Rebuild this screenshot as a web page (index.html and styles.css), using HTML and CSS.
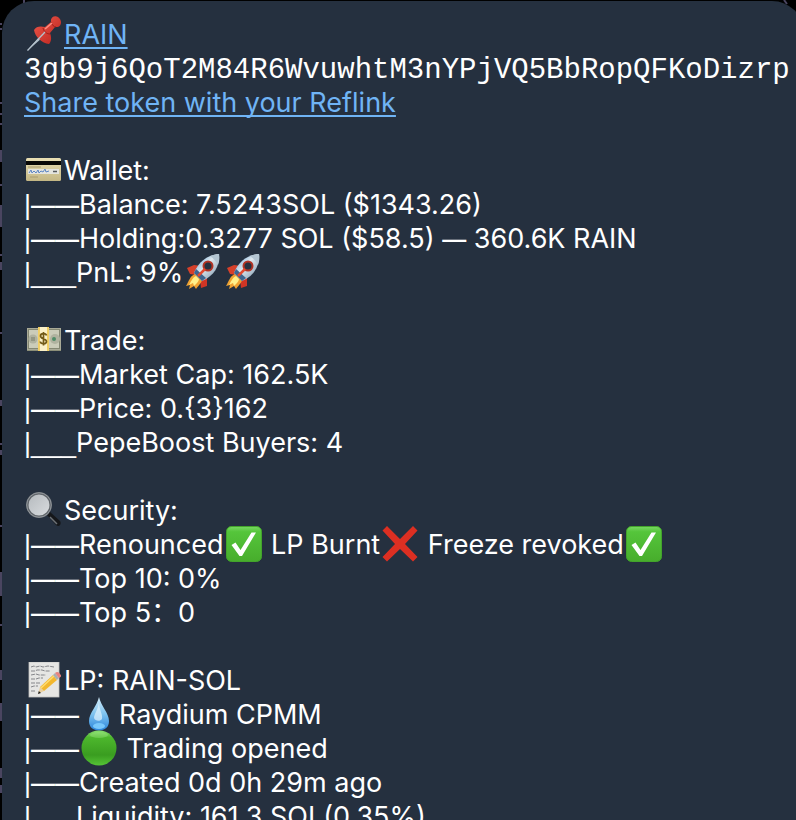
FILE: index.html
```
<!DOCTYPE html>
<html lang="en">
<head>
    <meta charset="UTF-8">
    <meta name="viewport" content="width=device-width, initial-scale=1.0">
    <title>RAIN</title>
    <link rel="stylesheet" href="styles.css">
</head>
<body>
    <!-- emoji shapes -->
    <svg class="defs" width="0" height="0" aria-hidden="true">
        <defs>
            <linearGradient id="gCard" x1="0" y1="0" x2="0" y2="1"><stop offset="0" stop-color="#e9dfb4"/><stop offset="1" stop-color="#c3b684"/></linearGradient>
            <linearGradient id="gGreen" x1="0" y1="0" x2="0" y2="1"><stop offset="0" stop-color="#79d963"/><stop offset=".15" stop-color="#55c53b"/><stop offset="1" stop-color="#47ad2c"/></linearGradient>
            <linearGradient id="gBall" x1="0" y1="0" x2="0" y2="1"><stop offset="0" stop-color="#8be070"/><stop offset=".2" stop-color="#4db72d"/><stop offset=".7" stop-color="#3a9d20"/><stop offset="1" stop-color="#55c436"/></linearGradient>
            <linearGradient id="gDrop" x1="0" y1="0" x2="0" y2="1"><stop offset="0" stop-color="#d6eefb"/><stop offset=".5" stop-color="#7fc3ef"/><stop offset="1" stop-color="#2b86dc"/></linearGradient>
            <linearGradient id="gBody" x1="0" y1="0" x2="1" y2="1"><stop offset="0" stop-color="#4f94cf"/><stop offset=".45" stop-color="#dfe8ee"/><stop offset="1" stop-color="#6d8ba5"/></linearGradient>
            <linearGradient id="gLens" x1="0" y1="0" x2="1" y2="1"><stop offset="0" stop-color="#b4b9bd"/><stop offset="1" stop-color="#dadde0"/></linearGradient>
            <linearGradient id="gPin" x1="0" y1="0" x2="1" y2="1"><stop offset="0" stop-color="#f0594c"/><stop offset="1" stop-color="#b9221c"/></linearGradient>
        </defs>
        <symbol id="pin" viewBox="0 0 36 36">
            <path d="M1 35 L14 20 L16 22 Z" fill="#aebfca"/>
            <path d="M8 14 C10 10 15 10 19 11 L25 6 C24 2 28 -1 32 1 C36 4 36 9 32 11 L29 11 L24 17 C26 22 25 26 23 28 C16 27 9 21 8 14 Z" fill="url(#gPin)"/>
            <path d="M25 6 C26 9 28 11 30 11 M17 12 C18 16 21 18 24 18" stroke="#a01d18" stroke-width="1" fill="none"/>
            <path d="M19 13 L26 7" stroke="#ff8d80" stroke-width="1.6"/>
            <path d="M1.500 34.500 L19 16" stroke="#b3c0ca" stroke-width="1.3"/>
        </symbol>
        <symbol id="card" viewBox="0 0 36 36">
            <rect x="0" y="6" width="35" height="23" rx="1.5" fill="url(#gCard)"/>
            <rect x="0" y="9" width="35" height="4" fill="#080806"/>
            <rect x="2" y="17" width="31" height="5" fill="#e4e4de"/>
            <path d="M3 21 l2 -3 l1 3 l2 -2 l2 2 l2 -3 l1 3 l2 -2 l2 1 l2 -3 l1 3 l3 -1" stroke="#5e86c4" stroke-width="1" fill="none"/>
            <path d="M27 19.500 h4" stroke="#55585c" stroke-width="1.500"/>
            <path d="M2 15 h13 M4 25 h8" stroke="#a89b70" stroke-width="1"/>
        </symbol>
        <symbol id="rocket" viewBox="0 0 36 36">
            <path d="M2 14 L9 11 L17 12 L11 21 L5 20 Z" fill="#d6402a"/>
            <path d="M22 21 L22 32 L16 34 L15 25 Z" fill="#cf3525"/>
            <path d="M10 20 C5 22 4 27 1 32 L5 31 L4 35 L9 32 L11 35 C14 31 17 28 17 26 Z" fill="#f0a232"/>
            <path d="M11 22 C7 24 6 28 4 31 L8 29 L9 32 C12 29 14 27 14 25 Z" fill="#fff08a"/>
            <path d="M9 19 C13 9 21 1 34 0 C35 12 29 22 17 27 Z" fill="url(#gBody)"/>
            <path d="M25 2 C28 1 31 0 34 0 C35 4 34 8 33 11 C31 7 29 5 25 2 Z" fill="#b4c5d2"/>
            <path d="M9 19 L11 15 L21 24 L17 27 Z" fill="#3f648e"/>
            <circle cx="23" cy="12" r="5.500" fill="#b23324"/>
            <circle cx="23" cy="12" r="3.500" fill="#26313f"/>
            <path d="M13 22 L20 15" stroke="#e24a31" stroke-width="2.500"/>
        </symbol>
        <symbol id="money" viewBox="0 0 36 36">
            <rect x="1" y="27" width="34" height="2" fill="#8b8e78"/>
            <rect x="1" y="6" width="34" height="22" fill="#a9aa97"/>
            <rect x="2.500" y="7.500" width="31" height="19" fill="#cbccb9" stroke="#858873" stroke-width="1"/>
            <circle cx="7" cy="17" r="4.500" fill="#b0b29f"/><circle cx="29" cy="17" r="5" fill="#b0b29f"/>
            <path d="M6 15 v4 M8 15 v4" stroke="#777a68"/>
            <circle cx="28" cy="17" r="2" fill="#4e8c67"/>
            <rect x="12" y="5" width="11" height="24" fill="#f1cf66"/>
            <rect x="14" y="5" width="7" height="24" fill="#faf0c8"/>
            <path d="M20.500 13.500 C20 11 14.500 11 14.500 14 C14.500 17.500 20.500 16 20.500 19.500 C20.500 22.500 14.500 22.500 14.300 19.500 M17.500 10 V23.500" stroke="#725a18" stroke-width="1.700" fill="none"/>
        </symbol>
        <symbol id="glass" viewBox="0 0 36 36">
            <path d="M21 23 L24 20 L34 29 C36 32 33 36 30 33 Z" fill="#15171a"/>
            <path d="M24 25 L31 32" stroke="#6c7176" stroke-width="1.500"/>
            <circle cx="13" cy="13" r="11.700" fill="url(#gLens)" stroke="#62676c" stroke-width="2.500"/>
            <circle cx="13" cy="13" r="12.300" fill="none" stroke="#a0a5a9" stroke-width=".8"/>
        </symbol>
        <symbol id="check" viewBox="0 0 36 36">
            <rect x=".5" y=".5" width="35" height="35" rx="5" fill="url(#gGreen)" stroke="#43a42b"/>
            <path d="M5.500 19 L9.500 16.500 L14.500 24 L25.500 6.500 H30 L16 30 H13.500 Z" fill="#fff"/>
        </symbol>
        <symbol id="cross" viewBox="0 0 36 36">
            <path d="M5 0 L18 13 L31 0 L35.500 4.500 L23 18 L35.500 31 L31 35.500 L18 23 L5 35.500 L.5 31 L13 18 L.5 4.500 Z" fill="#dc2f22"/>
        </symbol>
        <symbol id="memo" viewBox="0 0 36 36">
            <rect x="3" y="0" width="30" height="35" fill="#e6e6e4" stroke="#c4c4c1" stroke-width=".8"/>
            <path d="M5 5 l3 -1 l2 1 l4 -1 l3 1 l5 -1 l6 1 M5 9 h4 l2 -1 h5 l3 1 h5 M5 13 l5 -1 l3 1 h7 M5 17 h5 l3 -1 h4 M5 21 h9 M5 25 l3 -1 h4 M5 29 h4" stroke="#85868a" stroke-width="1" fill="none" stroke-dasharray="4 1"/>
            <path d="M12 32 L14 25 L18 29 Z" fill="#ead0a0"/><path d="M12 32 L12.800 29 L15 31 Z" fill="#222"/>
            <path d="M14 25 L27 13 L31 18 L18 29 Z" fill="#f2b72e"/>
            <path d="M15 26 L28 14" stroke="#ffdc70" stroke-width="1.500"/>
            <path d="M27 13 L29 11 L33 16 L31 18 Z" fill="#a9afb3"/>
            <path d="M29 11 C31 9 33 10 34 12 C36 14 35 15 33 16 Z" fill="#e8837f"/>
        </symbol>
        <symbol id="drop" viewBox="0 0 36 36">
            <path d="M18 1 C20 10 28 17 28 25 C28 31 24 34.500 18 34.500 C12 34.500 8 31 8 25 C8 17 16 10 18 1 Z" fill="url(#gDrop)"/>
            <path d="M18 6 C18 14 22 18 21 23 C19 26 14 25 13 22 C13 18 17 14 18 6 Z" fill="#e9f7ff" opacity=".65"/>
            <ellipse cx="18" cy="30" rx="6" ry="3" fill="#79c8fb"/>
        </symbol>
        <symbol id="ball" viewBox="0 0 36 36">
            <circle cx="18" cy="18" r="17.500" fill="url(#gBall)"/>
            <ellipse cx="18" cy="5" rx="9" ry="3" fill="#a5ec8c" opacity=".35"/>
        </symbol>
    </svg>

    <!-- chat wallpaper behind the bubble -->
    <svg class="wallpaper" aria-hidden="true" fill="none" stroke="#4a4560" stroke-width="2">
        <path d="M24 0 v3 M0 24 h2 M0 29 h2 M0 103 h2 M0 114 h2 M0 124 h2 M1 150 v12 M0 185 h2 M1 205 v22 M0 255 h2 M1 262 v8 M0 333 h2 M1 400 v6 M0 444 h2 M1 450 v5 M0 526 h2 M1 572 v24 M0 625 h2 M1 670 v10 M1 703 v18 M1 768 v10 M1 785 v8 M784 0 l3 4"/>
    </svg>

    <main class="message">
        <section class="block">
            <p><svg class="emoji" role="img" aria-label="pushpin"><use href="#pin"/></svg><a href="#">RAIN</a></p>
            <p><code>3gb9j6QoT2M84R6WvuwhtM3nYPjVQ5BbRopQFKoDizrp</code></p>
            <p><a href="#">Share token with your Reflink</a></p>
        </section>

        <section class="block">
            <p><svg class="emoji" role="img" aria-label="card"><use href="#card"/></svg>Wallet:</p>
            <p><span class="tree">|<span class="dash">——</span></span>Balance: 7.5243SOL ($1343.26)</p>
            <p><span class="tree">|<span class="dash">——</span></span>Holding:0.3277 SOL ($58.5) <span class="dash">—</span> 360.6K RAIN</p>
            <p><span class="tree">|___</span>PnL: 9%<svg class="emoji" role="img" aria-label="rocket"><use href="#rocket"/></svg><svg class="emoji" role="img" aria-label="rocket"><use href="#rocket"/></svg></p>
        </section>

        <section class="block">
            <p><svg class="emoji" role="img" aria-label="money"><use href="#money"/></svg>Trade:</p>
            <p><span class="tree">|<span class="dash">——</span></span>Market Cap: 162.5K</p>
            <p><span class="tree">|<span class="dash">——</span></span>Price: 0.{3}162</p>
            <p><span class="tree">|___</span>PepeBoost Buyers: 4</p>
        </section>

        <section class="block">
            <p><svg class="emoji" role="img" aria-label="search"><use href="#glass"/></svg>Security:</p>
            <p><span class="tree">|<span class="dash">——</span></span>Renounced<svg class="emoji" role="img" aria-label="yes"><use href="#check"/></svg> LP Burnt<svg class="emoji" role="img" aria-label="no"><use href="#cross"/></svg> Freeze revoked<svg class="emoji" role="img" aria-label="yes"><use href="#check"/></svg></p>
            <p><span class="tree">|<span class="dash">——</span></span>Top 10: 0%</p>
            <p><span class="tree">|<span class="dash">——</span></span>Top 5：0</p>
        </section>

        <section class="block">
            <p><svg class="emoji" role="img" aria-label="memo"><use href="#memo"/></svg>LP: RAIN-SOL</p>
            <p><span class="tree">|<span class="dash">——</span></span><svg class="emoji" role="img" aria-label="droplet"><use href="#drop"/></svg>Raydium CPMM</p>
            <p><span class="tree">|<span class="dash">——</span></span><svg class="emoji" role="img" aria-label="green circle"><use href="#ball"/></svg> Trading opened</p>
            <p><span class="tree">|<span class="dash">——</span></span>Created 0d 0h 29m ago</p>
            <p><span class="tree">|___</span>Liquidity: 161.3 SOL(0.35%)</p>
        </section>
    </main>
</body>
</html>
```
FILE: styles.css
```
* {
    margin: 0;
    padding: 0;
    box-sizing: border-box;
}

body {
    height: 100vh;
    overflow: hidden;
    background: #000;
    color: #fff;
    font-family: Inter, "Noto Sans CJK SC", sans-serif;
    font-size: 27px;
    line-height: 34px;
}

.defs {
    position: absolute;
}

.wallpaper {
    position: absolute;
    top: 0;
    left: 0;
    width: 100%;
    height: 100%;
}

.message {
    position: relative;
    margin: 1px -8px 0 2px;
    padding: 17px 8px 16px 22px;
    border-radius: 32px;
    background: #25303f;
}

.block + .block {
    margin-top: 34px;
}

.block p {
    height: 34px;
    white-space: nowrap;
}

.message a {
    color: #70b4f5;
    text-decoration: underline;
    text-decoration-thickness: 2px;
    text-underline-offset: 3px;
    text-decoration-skip-ink: none;
}

.message code {
    font-family: "Liberation Mono", monospace;
    font-size: 29px;
}

/* tree lines in front of each row */
.tree {
    font-family: "Liberation Sans", sans-serif;
}

.dash {
    font-family: Inter, sans-serif;
    font-size: 24px;
    font-weight: 500;
}

.emoji {
    width: 36px;
    height: 36px;
    margin: -4px 2px;
    vertical-align: -4px;
}
```
